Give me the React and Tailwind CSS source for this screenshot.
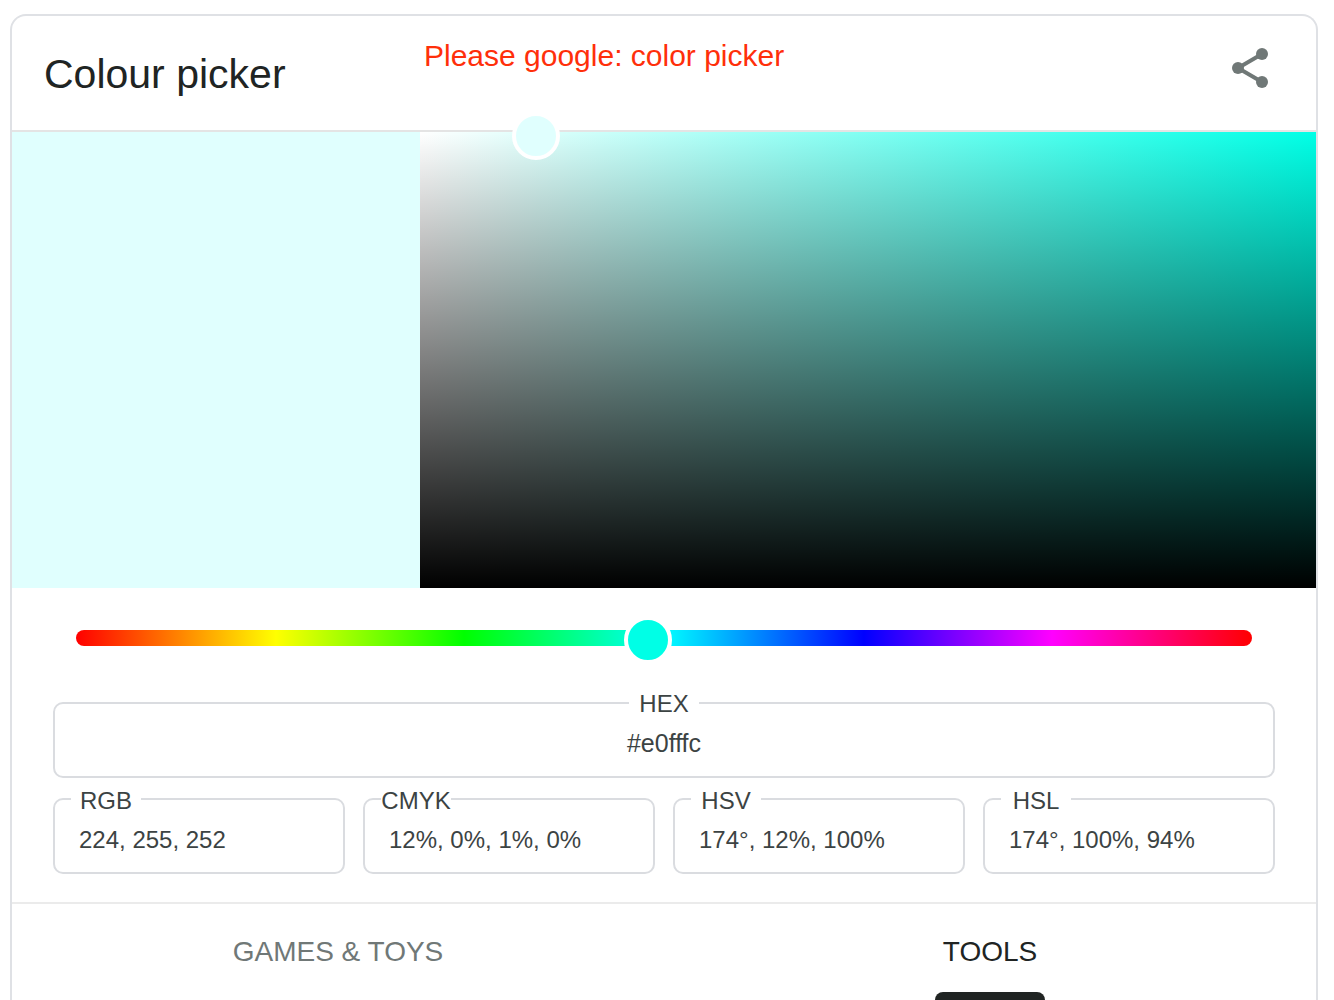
import { useState } from "react";

function Field({ id, label, value, centered = false }) {
  return (
    <div className="relative flex h-[76px] min-w-0 rounded-[10px] border-2 border-[#dadce0]">
      <label
        htmlFor={id}
        className={
          centered
            ? "absolute -top-4 left-1/2 w-[70px] -translate-x-1/2 bg-white text-center text-[24px] leading-8"
            : "absolute -top-[15px] left-4 w-[70px] bg-white text-center text-[24px] leading-8"
        }
      >
        {label}
      </label>
      <input
        id={id}
        type="text"
        defaultValue={value}
        className={
          centered
            ? "w-full min-w-0 bg-transparent px-5 pt-2 text-center text-[25px] outline-none"
            : "w-full min-w-0 bg-transparent pt-2 pl-6 text-[24px] outline-none"
        }
      />
    </div>
  );
}

function ShareIcon() {
  return (
    <svg viewBox="0 0 48 48" className="size-12" aria-hidden="true">
      <path d="M36 10 12 24l24 14" fill="none" stroke="currentColor" strokeWidth="4" />
      <circle cx="36" cy="10" r="6" fill="currentColor" />
      <circle cx="12" cy="24" r="6" fill="currentColor" />
      <circle cx="36" cy="38" r="6" fill="currentColor" />
    </svg>
  );
}

export default function App() {
  const [hue, setHue] = useState(175);

  return (
    <div className="min-h-screen bg-white pt-[14px] pr-4 pl-[10px] font-['Liberation_Sans',Arial,sans-serif] text-[#3c4343]">
      <main className="rounded-t-2xl border-2 border-b-0 border-[#dfe1e5]">
        <header className="flex h-[116px] items-center border-b-2 border-[#e4e4e4] pr-[42px]">
          <h1 className="w-[408px] shrink-0 pt-0.5 pl-8 text-[41px] leading-12 text-[#202423]">
            Colour picker
          </h1>
          <p className="flex-1 self-start pt-5 pl-1 text-[30px] leading-10 text-[#ff2f0a]">
            Please google: color picker
          </p>
          <button type="button" aria-label="Share" className="mb-[10px] text-[#707877]">
            <ShareIcon />
          </button>
        </header>

        <section className="flex h-[456px]">
          <div className="w-[408px] shrink-0 bg-[#e0fffe]" />
          <div className="relative flex-1 bg-[linear-gradient(to_top,#000,transparent),linear-gradient(to_right,#fff,#00ffe6)]">
            <button
              type="button"
              aria-label="Saturation and brightness"
              className="absolute top-1 left-[13%] size-12 -translate-x-1/2 -translate-y-1/2 rounded-full border-4 border-white bg-[#e0fffe]"
            />
          </div>
        </section>

        <div className="px-16 pt-[42px]">
          <input
            type="range"
            aria-label="Hue"
            min="0"
            max="360"
            value={hue}
            onChange={(e) => setHue(Number(e.target.value))}
            className="block h-4 w-full appearance-none rounded-full bg-[linear-gradient(to_right,#f00_0%,#ff0_17%,#0f0_33%,#0ff_50%,#00f_67%,#f0f_83%,#f00_100%)] outline-none [&::-webkit-slider-runnable-track]:h-4 [&::-webkit-slider-thumb]:-mt-[14px] [&::-webkit-slider-thumb]:size-12 [&::-webkit-slider-thumb]:appearance-none [&::-webkit-slider-thumb]:rounded-full [&::-webkit-slider-thumb]:border-4 [&::-webkit-slider-thumb]:border-solid [&::-webkit-slider-thumb]:border-white [&::-webkit-slider-thumb]:bg-[#00ffe6]"
          />
        </div>

        <div className="flex flex-col gap-5 px-[41px] pt-14 pb-7">
          <Field id="hex" label="HEX" value="#e0fffc" centered />
          <div className="grid grid-cols-4 gap-[18px]">
            <Field id="rgb" label="RGB" value="224, 255, 252" />
            <Field id="cmyk" label="CMYK" value="12%, 0%, 1%, 0%" />
            <Field id="hsv" label="HSV" value="174°, 12%, 100%" />
            <Field id="hsl" label="HSL" value="174°, 100%, 94%" />
          </div>
        </div>

        <nav className="grid grid-cols-2 border-t-2 border-[#ebebeb] text-[28px]">
          <button type="button" className="h-24 text-[#707877]">
            GAMES &amp; TOYS
          </button>
          <button
            type="button"
            aria-current="page"
            className="flex h-24 flex-col items-center justify-end text-[#202423]"
          >
            <span className="flex flex-1 items-center pt-2">TOOLS</span>
            <span className="h-2 w-[110px] rounded-t-lg bg-[#202423]" />
          </button>
        </nav>
      </main>
    </div>
  );
}
